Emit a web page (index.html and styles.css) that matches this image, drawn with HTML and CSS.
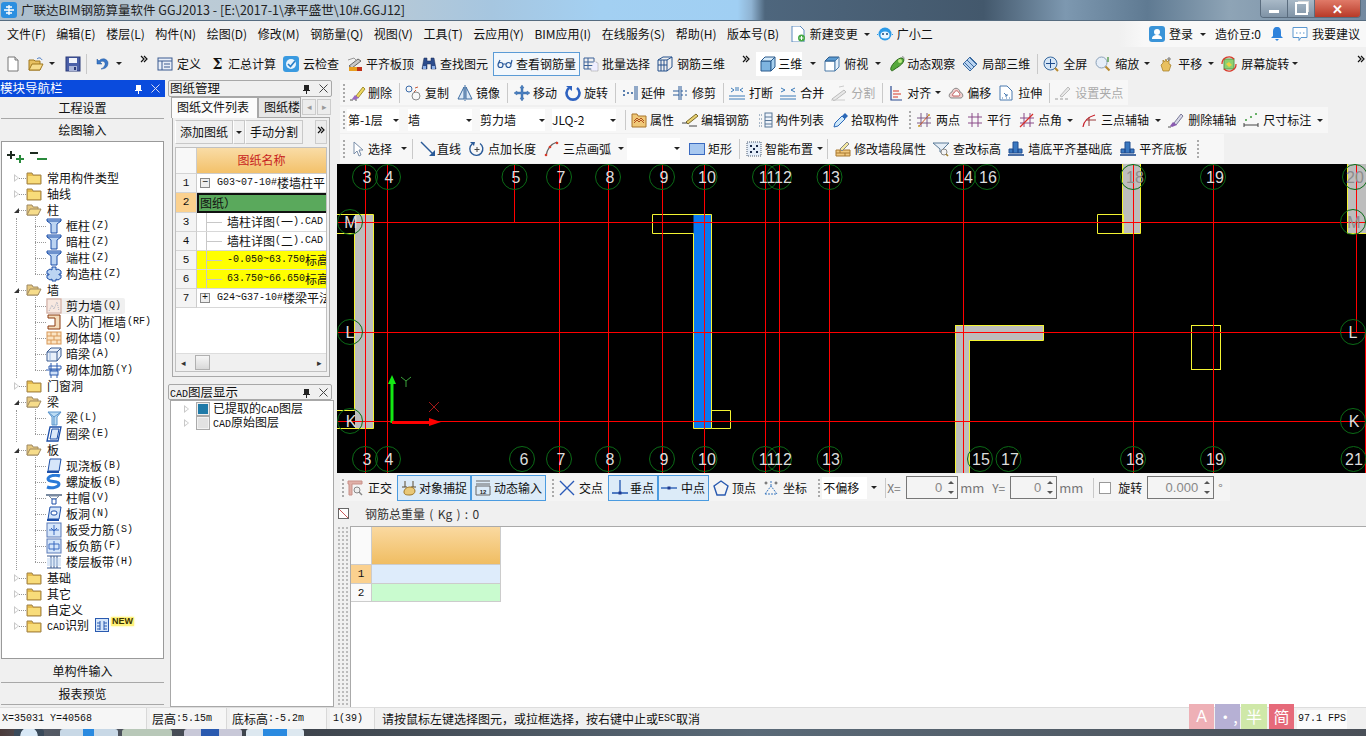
FILE: index.html
```html
<!DOCTYPE html>
<html lang="zh-CN">
<head>
<meta charset="utf-8">
<title>广联达BIM钢筋算量软件 GGJ2013</title>
<link rel="stylesheet" href="styles.css">
</head>
<body>
<svg class="defs" xmlns="http://www.w3.org/2000/svg">
<symbol id="new" viewBox="0 0 16 16"><path d="M3 1h7l3 3v11H3z" fill="#fff" stroke="#777"/><path d="M10 1v3h3" fill="#ddd" stroke="#777"/></symbol>
<symbol id="open" viewBox="0 0 16 16"><path d="M1 14V4h5l1 1h5v9z" fill="#e8c060" stroke="#a07820"/><path d="M1 14l3-6h11l-3 6z" fill="#f7dc8c" stroke="#a07820"/><path d="M9 3c2-2 4-1 5 1" fill="none" stroke="#3a70c0"/></symbol>
<symbol id="save" viewBox="0 0 16 16"><rect x="1" y="1" width="14" height="14" fill="#4a5fa8" stroke="#2a3a78"/><rect x="4" y="2" width="8" height="5" fill="#f2f4fa"/><rect x="4" y="10" width="8" height="5" fill="#aab4d8"/><rect x="9" y="11" width="2" height="3" fill="#2a3a78"/></symbol>
<symbol id="undo" viewBox="0 0 16 16"><path d="M3 3v5h5L6 6c3-2 6 0 5 3-1 2-2 3-4 4 5 0 7-3 7-6 0-4-6-6-9-2z" fill="#3b78c8" stroke="#1f559c" stroke-width=".5"/></symbol>
<symbol id="def" viewBox="0 0 16 16"><rect x="1" y="2" width="14" height="12" fill="#e8eef8" stroke="#3a5a90"/><path d="M1 5h14M5 5v9M7 8h6M7 11h6" stroke="#3a5a90" fill="none"/></symbol>
<symbol id="cloud" viewBox="0 0 16 16"><rect x="0" y="0" width="16" height="16" rx="3" fill="#3a9ae0"/><circle cx="8" cy="8" r="5" fill="#eaf5fd"/><path d="M5 8l2.500 2.500L12 5" fill="none" stroke="#2a7fc8" stroke-width="1.700"/></symbol>
<symbol id="flush" viewBox="0 0 16 16"><path d="M2 10l9-7 3 2-9 7z" fill="#c8c8c8" stroke="#666"/><path d="M1 4l6-2 2 2" fill="none" stroke="#999"/><rect x="2" y="11" width="8" height="4" fill="#e8a020"/><rect x="10" y="11" width="5" height="4" fill="#c03018"/></symbol>
<symbol id="binoc" viewBox="0 0 16 16"><path d="M3 2h3v3h4V2h3l2 11h-5V8H6v5H1z" fill="#2c4c8c" stroke="#1a2a55" stroke-width=".5"/><rect x="2" y="10" width="3" height="3" fill="#8cb0e8"/><rect x="11" y="10" width="3" height="3" fill="#8cb0e8"/></symbol>
<symbol id="glasses" viewBox="0 0 16 16"><path d="M1 9a2.500 2.500 0 1 0 5 0 2.500 2.500 0 1 0-5 0zM9 9a2.500 2.500 0 1 0 5 0 2.500 2.500 0 1 0-5 0zM6 8l3 0M1 8l2-4M14 8l1-4" fill="none" stroke="#2a5a9c" stroke-width="1.200"/></symbol>
<symbol id="batch" viewBox="0 0 16 16"><path d="M1 2h10v11H1zM1 6h10M1 9.500h10M5 2v11" fill="none" stroke="#3a6098"/><path d="M11 5l4 2v8H8v-2" fill="#eef" stroke="#999" stroke-dasharray="1 1"/></symbol>
<symbol id="r3d" viewBox="0 0 16 16"><path d="M1 4l5-3h9v10l-5 4H1zM1 4h9v11M10 4l5-3M4 4v11M7 4v11M1 9h9" fill="none" stroke="#25508c"/></symbol>
<symbol id="cube" viewBox="0 0 16 16"><path d="M1 5h10v10H1z" fill="#7eb4e0" stroke="#2a5a8c"/><path d="M1 5l4-4h10l-4 4z" fill="#d6ebfa" stroke="#2a5a8c"/><path d="M11 5l4-4v10l-4 4z" fill="#a8d0ee" stroke="#2a5a8c"/></symbol>
<symbol id="top" viewBox="0 0 16 16"><path d="M1 5h10v10H1z" fill="#fff" stroke="#4a7aa8"/><path d="M1 5l4-4h10l-4 4z" fill="#5a9ad0" stroke="#2a5a8c"/><path d="M11 5l4-4v10l-4 4z" fill="#e6f0fa" stroke="#4a7aa8"/></symbol>
<symbol id="orbit" viewBox="0 0 16 16"><path d="M2 14c-2-3 7-13 11-12s1 6-4 9-6 5-7 3z" fill="#56a83c" stroke="#2c6a1c"/><path d="M13 1c1-1 2 0 2 2" fill="none" stroke="#888"/><circle cx="11" cy="5" r="2" fill="#b8e880"/></symbol>
<symbol id="local" viewBox="0 0 16 16"><path d="M1 8l7-7 7 7-7 7z" fill="#b9d3f0" stroke="#3a6aa0"/><path d="M5 4l7 7M8 2l6 6M3 7l6 6" stroke="#3a6aa0" fill="none"/></symbol>
<symbol id="fulls" viewBox="0 0 16 16"><circle cx="7.500" cy="7.500" r="6.500" fill="#d6e6f6" stroke="#3a6aa0"/><path d="M7.500 3v9M3 7.500h9" stroke="#1f4c8c"/><path d="M12 12l3 3" stroke="#b88a30" stroke-width="2"/></symbol>
<symbol id="zoomi" viewBox="0 0 16 16"><circle cx="6.500" cy="6.500" r="5.500" fill="#e6eef8" stroke="#8aa0b8"/><path d="M10.500 10.500l4 4" stroke="#b88a30" stroke-width="2.200"/><path d="M13 1v5" stroke="#3a8a30" stroke-width="1.200"/></symbol>
<symbol id="pan" viewBox="0 0 16 16"><path d="M3 9l2-2V4l1.500 2L8 3l1 3 2-2v4l2 1-2 6H5z" fill="#e8c060" stroke="#a07820" stroke-width=".7"/><path d="M11 1v4M9 3h4" stroke="#777"/></symbol>
<symbol id="srot" viewBox="0 0 16 16"><rect x="3" y="3" width="10" height="10" fill="#8cd070" stroke="#5a9a50"/><path d="M5 8l3-2 3 3-3 2z" fill="#f0d040"/><path d="M1 8a7 7 0 0 1 12-5M15 8a7 7 0 0 1-12 5" fill="none" stroke="#d83a2a" stroke-width="1.300"/></symbol>
<symbol id="change" viewBox="0 0 16 16"><path d="M2 0h8l4 4v12H2z" fill="#fff" stroke="#5a8abf"/><circle cx="11.500" cy="12" r="3.500" fill="#46a846"/><path d="M9.500 12h4M11.500 10v4" stroke="#fff"/></symbol>
<symbol id="bot" viewBox="0 0 16 16"><circle cx="8" cy="8" r="6.500" fill="#2a9ae8"/><ellipse cx="8" cy="9" rx="4.500" ry="3.500" fill="#e8f6ff"/><circle cx="6" cy="8" r="1" fill="#1a4a7a"/><circle cx="10" cy="8" r="1" fill="#1a4a7a"/><path d="M1 8l-1 1M15 8l1 1" stroke="#2a9ae8"/></symbol>
<symbol id="user" viewBox="0 0 16 16"><rect width="16" height="16" rx="3" fill="#3a94d8"/><circle cx="8" cy="6" r="3" fill="#fff"/><path d="M3 13c0-3 2-4 5-4s5 1 5 4z" fill="#fff"/></symbol>
<symbol id="bell" viewBox="0 0 12 16"><path d="M6 1c3 0 4 2 4 5v4l2 2H0l2-2V6c0-3 1-5 4-5z" fill="#2f83dc"/><path d="M4 13h4l-2 2z" fill="#2f83dc"/></symbol>
<symbol id="idea" viewBox="0 0 16 16"><path d="M1 1.500h14v10H9l-2 3v-3H1z" fill="#fff" stroke="#5b97cf"/><path d="M4 7h1.500M7.500 7H9M11 7h1.500" stroke="#5b97cf"/></symbol>
<symbol id="del" viewBox="0 0 16 16"><path d="M6 11L13 2l2 2-7 9z" fill="#f0d860" stroke="#a09030"/><path d="M5 10l4 3-5 2-2-1z" fill="#9a6ac0"/><path d="M0 15h3M5 15h2" stroke="#555"/></symbol>
<symbol id="copy" viewBox="0 0 16 16"><circle cx="4" cy="4" r="3" fill="none" stroke="#3a6aa8"/><circle cx="11" cy="11" r="4" fill="none" stroke="#888"/><path d="M10 3l3-1M9 7l2-2" stroke="#c85a3a"/></symbol>
<symbol id="mirror" viewBox="0 0 16 16"><path d="M7 2L1 14h6zM9 2l6 12H9z" fill="#dbe8f6" stroke="#3a6aa0"/><path d="M8 0v16" stroke="#3a6aa0"/></symbol>
<symbol id="move" viewBox="0 0 16 16"><path d="M8 0l2 3H9v4h4V6l3 2-3 2V9H9v4h1l-2 3-2-3h1V9H3v1L0 8l3-2v1h4V3H6z" fill="#4a7fc0" stroke="#2a5a98" stroke-width=".4"/></symbol>
<symbol id="rot" viewBox="0 0 16 16"><path d="M4 3a6.500 6.500 0 1 0 8 0" fill="none" stroke="#2e62c0" stroke-width="2.600"/><path d="M1 1h6v5z" fill="#2e62c0"/></symbol>
<symbol id="extend" viewBox="0 0 16 16"><path d="M1 6h2M1 10h2M5 8h2M9 8h2" stroke="#2a5a98" stroke-width="1.400"/><path d="M13 1v14M15 1v14" stroke="#2a5a98"/></symbol>
<symbol id="trim" viewBox="0 0 16 16"><path d="M6 1v14M8 1v14" stroke="#2a5a98"/><path d="M0 6h6M0 10h6M8 6h2M12 6h2M8 10h2M12 10h2" stroke="#2a5a98"/></symbol>
<symbol id="brk" viewBox="0 0 16 16"><path d="M0 11h16M0 14h16" stroke="#3a7ab8"/><path d="M2 3l3 2-3 2M14 3l-3 2 3 2" fill="none" stroke="#3a7ab8"/><path d="M7 2v4M9 2v4" stroke="#3a7ab8"/></symbol>
<symbol id="merge" viewBox="0 0 16 16"><path d="M0 11h16M0 14h16" stroke="#3a7ab8"/><path d="M1 3l4 2-4 2M15 3l-4 2 4 2" fill="none" stroke="#3a7ab8"/></symbol>
<symbol id="split" viewBox="0 0 16 16"><path d="M1 14l12-9 2 2-12 9z" fill="#e8e8e8" stroke="#bbb"/><path d="M0 15h14M8 2l5-1" stroke="#ccc"/></symbol>
<symbol id="align" viewBox="0 0 13 16"><path d="M1 1v14h11" fill="none" stroke="#2a4a90" stroke-width="1.200"/><path d="M3 6h6M3 9h8M3 12h5" stroke="#d83a2a" stroke-width="1.200"/></symbol>
<symbol id="offset" viewBox="0 0 16 16"><path d="M3 13c-3-1-2-5 1-6 1-5 7-5 8 0 3 1 4 5 1 6z" fill="#f0d0d0" stroke="#888"/><path d="M5 11c-1-1 0-3 1-3 1-3 4-3 5 0 1 0 1 3 0 3z" fill="#fff" stroke="#c06060"/></symbol>
<symbol id="stretch" viewBox="0 0 16 16"><path d="M2 1h7l5 5v9H2z" fill="#fff" stroke="#4a7ab0"/><path d="M6 8l3 3M9 9v2H7" stroke="#4a7ab0" fill="none"/><path d="M4 13h1M8 13h1M11 13h1" stroke="#4a7ab0"/></symbol>
<symbol id="setgrip" viewBox="0 0 16 16"><path d="M5 11l8-9 2 2-8 8z" fill="#e8e8e8" stroke="#bbb"/><path d="M0 14h3M5 14h3M10 14h3" stroke="#bbb" stroke-width="1.400"/></symbol>
<symbol id="prop" viewBox="0 0 16 16"><path d="M1 15V2h5l1 2h8v11z" fill="#f0c878" stroke="#a8742a"/><path d="M3 11l3-3 2 2 2-2 3 3M3 9l3-3 2 2 2-2 3 3" fill="none" stroke="#b05020"/></symbol>
<symbol id="edit" viewBox="0 0 16 16"><path d="M4 10L14 2l2 2L6 12z" fill="#e8d070" stroke="#7a6a2a"/><path d="M0 11h5M7 14h8" stroke="#444"/></symbol>
<symbol id="list" viewBox="0 0 16 16"><rect x="8" y="1" width="7" height="14" fill="#eef3fa" stroke="#5a7898"/><path d="M8 5h7M8 8.500h7M8 12h7" stroke="#5a7898"/><path d="M2 3h3M2 7h3M2 11h3M2 14h3" stroke="#5a7898" stroke-dasharray="1 1"/></symbol>
<symbol id="pick" viewBox="0 0 16 16"><path d="M1 15l1-4 7-7 3 3-7 7z" fill="#cfe8fa" stroke="#2a68b8"/><path d="M9 4l3-3 3 3-3 3z" fill="#2a68b8"/></symbol>
<symbol id="twop" viewBox="0 0 16 16"><path d="M5 1v14M11 1v14M1 6h14M1 11h14" stroke="#7a5a88"/><path d="M3 14L13 3" stroke="#c85a2a"/><circle cx="3" cy="14" r="1" fill="#c8a030"/><circle cx="13" cy="3" r="1" fill="#c8a030"/></symbol>
<symbol id="para" viewBox="0 0 16 16"><path d="M5 1v14M11 1v14M1 5h14M1 11h14" stroke="#8a4a88"/></symbol>
<symbol id="angle" viewBox="0 0 16 16"><path d="M5 1v14M11 1v14M1 6h14M1 11h14" stroke="#8a4a88"/><path d="M1 15L14 2" stroke="#d8302a" stroke-width="1.200"/></symbol>
<symbol id="tpa" viewBox="0 0 16 16"><path d="M2 15C3 8 7 5 14 3" fill="none" stroke="#c8202a" stroke-width="1.200"/><path d="M8 5v9M5 8h10" stroke="#9a3a3a"/></symbol>
<symbol id="delax" viewBox="0 0 16 16"><path d="M6 11L13 2l2 2-7 9z" fill="#d8d8e8" stroke="#7a7a98"/><path d="M5 10l4 3-5 2-2-1z" fill="#8a5ab0"/><path d="M0 15h3" stroke="#555"/></symbol>
<symbol id="dim" viewBox="0 0 16 16"><path d="M1 11v4M15 11v4M1 13h14" stroke="#444"/><circle cx="3" cy="8" r="1" fill="#3a9a3a"/><circle cx="8" cy="5" r="1" fill="#3a9a3a"/><circle cx="13" cy="2" r="1" fill="#3a9a3a"/></symbol>
<symbol id="sel" viewBox="0 0 16 16"><path d="M2 1v12l3-3 2 5 2-1-2-5h4z" fill="#fff" stroke="#7a8ea8"/></symbol>
<symbol id="line" viewBox="0 0 16 16"><path d="M1 1l12 12" stroke="#2a5a98" stroke-width="1.400"/><path d="M15 9v6H9z" fill="#2a5a98"/></symbol>
<symbol id="ptlen" viewBox="0 0 16 16"><path d="M3 3a6.500 6.500 0 1 0 8-.5" fill="none" stroke="#2a5a98" stroke-width="1.400"/><path d="M1 1l5 0-1 4z" fill="#2a5a98"/><path d="M8 6v5M5.500 8.500h5" stroke="#444"/></symbol>
<symbol id="arc" viewBox="0 0 16 16"><path d="M2 15C3 8 7 3 13 1" fill="none" stroke="#666" stroke-width="1.300"/><circle cx="2" cy="14" r="1.300" fill="#d83a2a"/><circle cx="6" cy="6" r="1.300" fill="#d83a2a"/><circle cx="13" cy="2" r="1.300" fill="#d83a2a"/></symbol>
<symbol id="rect" viewBox="0 0 16 16"><rect x=".5" y="2.500" width="15" height="11" fill="#a8c8f0" stroke="#3a6ac0"/></symbol>
<symbol id="smart" viewBox="0 0 16 16"><rect x="1" y="1" width="14" height="14" fill="#e4edf8" stroke="#4a5a70" stroke-dasharray="1 1"/><path d="M4 4h2v2H4zM10 4h2v2h-2zM4 10h2v2H4zM10 10h2v2h-2zM7 7h2v2H7z" fill="#1a2a4a"/></symbol>
<symbol id="modwall" viewBox="0 0 16 16"><path d="M1 9h14v6H1z" fill="#f0c880" stroke="#a87830"/><path d="M1 12h14M5 9v3M10 12v3" stroke="#a87830"/><path d="M5 8l7-7 2 2-7 7z" fill="#f4e8a0" stroke="#888"/></symbol>
<symbol id="level" viewBox="0 0 16 16"><path d="M0 2h16L10 8v3H7V8z" fill="#e6eef6" stroke="#5a7a98"/><circle cx="11" cy="11" r="3" fill="#f4f4f4" stroke="#888"/><path d="M13 13l2 2" stroke="#a08030" stroke-width="1.600"/></symbol>
<symbol id="wbase" viewBox="0 0 16 16"><path d="M5 1h5v11H5zM1 8h4v4H1zM10 8h4v4h-4z" fill="#3a78c0" stroke="#1f4c90"/><path d="M0 14h16" stroke="#1f4c90" stroke-width="1.600"/></symbol>
<symbol id="ortho" viewBox="0 0 16 16"><path d="M1 1h14v3H5v11H2V4H1z" fill="#e0b0a8" stroke="#c89088"/><circle cx="10" cy="10" r="3" fill="#eee" stroke="#888"/><path d="M12 12l3 3" stroke="#888" stroke-width="1.400"/></symbol>
<symbol id="snap" viewBox="0 0 16 16"><path d="M4 1v6M12 1v6M1 7h5M10 7h5" stroke="#5a4a30"/><path d="M3 12c0-3 3-5 6-5s5 2 5 4-2 4-5 4-6 0-6-3z" fill="#e8c878" stroke="#a07828"/></symbol>
<symbol id="dyn" viewBox="0 0 16 16"><path d="M1 1h14M1 4h14M1 6h14v9H1z" fill="none" stroke="#666"/><text class="tiny" x="8" y="14">12</text></symbol>
<symbol id="cross" viewBox="0 0 16 16"><path d="M1 1l14 14M15 1L1 15" stroke="#2a5ab8" stroke-width="1.400"/></symbol>
<symbol id="perp" viewBox="0 0 16 16"><path d="M8 0v13M0 13h16" stroke="#1f55b0" stroke-width="1.300"/><rect x="6.500" y="11.500" width="3" height="3" fill="#1f3a90"/></symbol>
<symbol id="mid" viewBox="0 0 16 16"><path d="M0 8h16" stroke="#1f55b0" stroke-width="1.300"/><rect x="6.500" y="6.500" width="3" height="3" fill="#1f3a90"/></symbol>
<symbol id="vert" viewBox="0 0 16 16"><path d="M8 1l7 5-3 9H4L1 6z" fill="none" stroke="#2a5ab0" stroke-width="1.400"/></symbol>
<symbol id="coord" viewBox="0 0 16 16"><path d="M2 14L8 6l6 8M8 6V1M2 14h12" fill="none" stroke="#3a78c0" stroke-dasharray="2 1"/><circle cx="3" cy="3" r="1" fill="none" stroke="#555"/><circle cx="13" cy="3" r="1" fill="none" stroke="#555"/></symbol>
<symbol id="col" viewBox="0 0 16 16"><path d="M1 1h14v2l-4 3v9H5V6L1 3z" fill="#bcd4f2" stroke="#1d4fa8"/><path d="M1 3h14" stroke="#1d4fa8"/></symbol>
<symbol id="col4" viewBox="0 0 16 16"><path d="M6 1h4v3l2-1 3 2v3h-2v1h2v3l-3 2-2-1v2H6v-2l-2 1-3-2v-3h2V8H1V5l3-2 2 1z" fill="#bcd4f2" stroke="#1d4fa8"/></symbol>
<symbol id="shear" viewBox="0 0 16 16"><rect x="1" y="1" width="14" height="14" fill="#f8e8e0" stroke="#c8a8a0"/><path d="M3 13l3-6 2 4 3-7 2 9" fill="none" stroke="#a8b0c0" stroke-dasharray="1 1"/></symbol>
<symbol id="door" viewBox="0 0 16 16"><path d="M2 1h12v14H2v-3h7V4H2z" fill="#f4dcbc" stroke="#8a3a10"/></symbol>
<symbol id="brick" viewBox="0 0 16 16"><rect x="1" y="2" width="14" height="12" fill="#fbe4c4" stroke="#d89858"/><path d="M1 6h14M1 10h14M5 2v4M11 2v4M8 6v4M5 10v4M11 10v4" stroke="#d89858"/></symbol>
<symbol id="hbeam" viewBox="0 0 16 16"><path d="M1 6l4-4h10v8l-4 5H1z" fill="#e8f0fa" stroke="#3a5a90"/><path d="M1 6h10v9M11 6l4-4" fill="none" stroke="#3a5a90"/><path d="M4 6v9" stroke="#9ab8e0"/></symbol>
<symbol id="net" viewBox="0 0 16 16"><path d="M3 4h12v3H3zM0 8h14M5 1v15M11 1v15" fill="none" stroke="#2a5ab0"/><rect x="4" y="9" width="8" height="4" fill="#cfe0f8" stroke="#2a5ab0"/></symbol>
<symbol id="beam" viewBox="0 0 16 16"><path d="M2 2l13 0-4 5v8H6V7z" fill="#bcdcf4" stroke="#5a94cc"/><path d="M8 7v8M2 2l6 5 7-5" fill="none" stroke="#5a94cc"/></symbol>
<symbol id="ring" viewBox="0 0 16 16"><path d="M4 1h11l-3 14H1z" fill="#fff" stroke="#1d4fa8" stroke-width="1.300"/><path d="M6 3h7l-2 10H4z" fill="#dbe8f8" stroke="#1d4fa8"/></symbol>
<symbol id="slab" viewBox="0 0 16 16"><path d="M4 1h11l-2 12H2z" fill="#d6e6fa" stroke="#1d4fa8"/><path d="M1 14h12" stroke="#1d4fa8" stroke-width="2"/></symbol>
<symbol id="spiral" viewBox="0 0 16 16"><path d="M14 2C9 0 2 2 2 5c0 4 11 1 11 5 0 3-7 5-12 3" fill="none" stroke="#2a7ad8" stroke-width="3"/></symbol>
<symbol id="cap" viewBox="0 0 16 16"><path d="M0 4h16v2H0z" fill="#7a8aa0"/><path d="M3 6h10l-3 3H6z" fill="#fff" stroke="#7a8aa0"/><path d="M6 9h4v5H6z" fill="#fff" stroke="#1d4fa8"/></symbol>
<symbol id="hole" viewBox="0 0 16 16"><path d="M4 1h11l-2 12H2z" fill="#d6e6fa" stroke="#1d4fa8"/><rect x="5" y="5" width="6" height="4" rx="2" fill="#fff" stroke="#1d4fa8"/><path d="M1 14h12" stroke="#1d4fa8" stroke-width="2"/></symbol>
<symbol id="srebar" viewBox="0 0 16 16"><rect x="1" y="1" width="14" height="14" fill="#d6e6fa" stroke="#5a7ab8"/><path d="M8 3v10M3 8h10M5 6l3 3 3-3" fill="none" stroke="#3a6ac0"/></symbol>
<symbol id="nrebar" viewBox="0 0 16 16"><rect x="1" y="1" width="14" height="14" fill="#d6e6fa" stroke="#5a7ab8"/><path d="M8 3v10M3 6h10v5H3z" fill="none" stroke="#3a6ac0"/></symbol>
<symbol id="band" viewBox="0 0 16 16"><path d="M1 2h14M1 14h14M5 2v12M11 2v12M8 2v12" stroke="#3a5a90"/><rect x="1" y="4" width="14" height="8" fill="#bcd4f2" fill-opacity=".5"/></symbol>
<symbol id="cad" viewBox="0 0 14 16"><rect x=".5" y="1.500" width="13" height="13" fill="#d6e6fa" stroke="#2a5ab0"/><path d="M5 4v9M9 4v9M2 6h3M2 9h3M2 12h3M9 6h3M9 9h3M9 12h3" stroke="#2a5ab0"/></symbol>
<symbol id="fold" viewBox="0 0 16 16"><path d="M1 3h5l1 2h8v9H1z" fill="#e6bb4c" stroke="#a0834a"/><path d="M2 6h12v7H2z" fill="#f8dc7a"/></symbol>
<symbol id="foldo" viewBox="0 0 16 16"><path d="M1 3h5l1 2h5v8H1z" fill="#e6c880" stroke="#a08a60"/><path d="M1 13l3-6h11l-3 6z" fill="#f6dc8a" stroke="#a08a60"/></symbol>
<symbol id="xp" viewBox="0 0 18 14"><path d="M0 5h3V2h2v3h3v2H5v3H3V7H0z" fill="#1d2a20"/><path d="M9 9h3V6h2v3h3v2h-3v3h-2v-3H9z" fill="#2a8a3c"/></symbol>
<symbol id="xm" viewBox="0 0 18 14"><path d="M0 3h8v2H0z" fill="#1d2a20"/><path d="M7 9h10v2H7z" fill="#2a8a3c"/></symbol>
<symbol id="pin" viewBox="0 0 9 10"><path d="M2 1h5v5h1v1H5v3H4V7H1V6h1z" fill="#222"/></symbol>
<symbol id="pinw" viewBox="0 0 9 10"><path d="M2 1h5v5h1v1H5v3H4V7H1V6h1z" fill="#fff"/></symbol>
<symbol id="close" viewBox="0 0 9 9"><path d="M.5.5l8 8M8.500.5l-8 8" stroke="#444"/></symbol>
<symbol id="closew" viewBox="0 0 9 9"><path d="M.5.5l8 8M8.500.5l-8 8" stroke="#dde"/></symbol>
<symbol id="dbl" viewBox="0 0 8 8"><path d="M1 1l3 3-3 3M4 1l3 3-3 3" fill="none" stroke="#111" stroke-width="1.200"/></symbol>
<symbol id="lay1" viewBox="0 0 14 14"><rect x=".5" y=".5" width="13" height="13" fill="#eee" stroke="#aaa"/><rect x="2" y="2" width="10" height="10" fill="#1f7aa8"/></symbol>
<symbol id="lay2" viewBox="0 0 14 14"><rect x=".5" y=".5" width="13" height="13" fill="#f2f2f2" stroke="#aaa"/><rect x="2" y="2" width="10" height="10" fill="#e2e2e2"/></symbol>
</svg>

<div class="win">
  <header class="title">
    <svg class="applogo" viewBox="0 0 16 16"><rect width="16" height="16" rx="3" fill="#2c8fe0"/><path d="M8 3v10M3 8h10M5 5h6M5 11h6" stroke="#fff" stroke-width="1.300" fill="none"/></svg>
    <span class="title-text">广联达BIM钢筋算量软件 GGJ2013 - [E:\2017-1\承平盛世\10#.GGJ12]</span>
    <div class="winbtns"><i class="wb wmin"></i><i class="wb wres"></i><i class="wb wcls">✕</i></div>
  </header>

  <nav class="menu">
    <span class="mi">文件(F)</span><span class="mi">编辑(E)</span><span class="mi">楼层(L)</span><span class="mi">构件(N)</span><span class="mi">绘图(D)</span><span class="mi">修改(M)</span><span class="mi">钢筋量(Q)</span><span class="mi">视图(V)</span><span class="mi">工具(T)</span><span class="mi">云应用(Y)</span><span class="mi">BIM应用(I)</span><span class="mi">在线服务(S)</span><span class="mi">帮助(H)</span><span class="mi">版本号(B)</span>
    <span class="it"><svg class="ic"><use href="#change"/></svg>新建变更</span><i class="dn m6"></i>
    <span class="it m7"><svg class="ic"><use href="#bot"/></svg>广小二</span>
    <div class="menu-right">
      <span class="it"><svg class="ic"><use href="#user"/></svg>登录</span><i class="dn m7"></i>
      <span class="m9">造价豆:0</span>
      <svg class="ic12 m10"><use href="#bell"/></svg>
      <span class="it m9"><svg class="ic"><use href="#idea"/></svg>我要建议</span>
    </div>
  </nav>

  <div class="tb1">
    <svg class="ic m5"><use href="#new"/></svg><svg class="ic m7"><use href="#open"/></svg><i class="dn m5"></i><svg class="ic m10"><use href="#save"/></svg><i class="sep m5"></i><svg class="ic m7"><use href="#undo"/></svg><i class="dn m6"></i>
    <svg class="dbl m18"><use href="#dbl"/></svg>
    <span class="it m9"><svg class="ic"><use href="#def"/></svg>定义</span>
    <span class="it m10 g4"><b class="sigma">Σ</b>汇总计算</span>
    <span class="it m7"><svg class="ic"><use href="#cloud"/></svg>云检查</span>
    <span class="it m8 g3"><svg class="ic"><use href="#flush"/></svg>平齐板顶</span>
    <span class="it m7 g3"><svg class="ic"><use href="#binoc"/></svg>查找图元</span>
    <span class="it m5 g3 on pad4"><svg class="ic"><use href="#glasses"/></svg>查看钢筋量</span>
    <span class="it m3 g3"><svg class="ic"><use href="#batch"/></svg>批量选择</span>
    <span class="it m7"><svg class="ic"><use href="#r3d"/></svg>钢筋三维</span>
    <svg class="dbl m17"><use href="#dbl"/></svg>
    <span class="it white m6 g2"><svg class="ic"><use href="#cube"/></svg>三维</span><i class="dn m8"></i>
    <span class="it m8"><svg class="ic"><use href="#top"/></svg>俯视</span><i class="dn m7"></i>
    <span class="it m8 g2"><svg class="ic"><use href="#orbit"/></svg>动态观察</span>
    <span class="it m7"><svg class="ic"><use href="#local"/></svg>局部三维</span><i class="sep m7"></i>
    <span class="it m5"><svg class="ic"><use href="#fulls"/></svg>全屏</span>
    <span class="it m8"><svg class="ic"><use href="#zoomi"/></svg>缩放</span><i class="dn m5"></i>
    <span class="it m8"><svg class="ic"><use href="#pan"/></svg>平移</span><i class="dn m6"></i>
    <span class="it m7"><svg class="ic"><use href="#srot"/></svg>屏幕旋转</span><i class="dn m3"></i>
    <svg class="dbl end"><use href="#dbl"/></svg>
  </div>

  <div class="main">
    <aside class="nav">
      <div class="nav-head"><span>模块导航栏</span><svg class="pin"><use href="#pinw"/></svg><svg class="cl"><use href="#closew"/></svg></div>
      <div class="navbtn">工程设置</div>
      <div class="navbtn b2">绘图输入</div>
      <div class="treebox">
        <div class="treetool"><svg class="xb"><use href="#xp"/></svg><svg class="xb"><use href="#xm"/></svg></div>
        <div class="row rt"><i class="exc"></i><svg class="ic"><use href="#fold"/></svg>常用构件类型</div>
        <div class="row rt"><i class="exc"></i><svg class="ic"><use href="#fold"/></svg>轴线</div>
        <div class="row rt"><i class="exo"></i><svg class="ic"><use href="#foldo"/></svg>柱</div>
        <div class="kids">
          <div class="row rc"><svg class="ic"><use href="#col"/></svg>框柱<span class="l">(Z)</span></div>
          <div class="row rc"><svg class="ic"><use href="#col"/></svg>暗柱<span class="l">(Z)</span></div>
          <div class="row rc"><svg class="ic"><use href="#col"/></svg>端柱<span class="l">(Z)</span></div>
          <div class="row rc"><svg class="ic"><use href="#col4"/></svg>构造柱<span class="l">(Z)</span></div>
        </div>
        <div class="row rt"><i class="exo"></i><svg class="ic"><use href="#foldo"/></svg>墙</div>
        <div class="kids">
          <div class="row rc"><span class="hl"><svg class="ic"><use href="#shear"/></svg>剪力墙<span class="l">(Q)</span></span></div>
          <div class="row rc"><svg class="ic"><use href="#door"/></svg>人防门框墙<span class="l">(RF)</span></div>
          <div class="row rc"><svg class="ic"><use href="#brick"/></svg>砌体墙<span class="l">(Q)</span></div>
          <div class="row rc"><svg class="ic"><use href="#hbeam"/></svg>暗梁<span class="l">(A)</span></div>
          <div class="row rc"><svg class="ic"><use href="#net"/></svg>砌体加筋<span class="l">(Y)</span></div>
        </div>
        <div class="row rt"><i class="exc"></i><svg class="ic"><use href="#fold"/></svg>门窗洞</div>
        <div class="row rt"><i class="exo"></i><svg class="ic"><use href="#foldo"/></svg>梁</div>
        <div class="kids">
          <div class="row rc"><svg class="ic"><use href="#beam"/></svg>梁<span class="l">(L)</span></div>
          <div class="row rc"><svg class="ic"><use href="#ring"/></svg>圈梁<span class="l">(E)</span></div>
        </div>
        <div class="row rt"><i class="exo"></i><svg class="ic"><use href="#foldo"/></svg>板</div>
        <div class="kids">
          <div class="row rc"><svg class="ic"><use href="#slab"/></svg>现浇板<span class="l">(B)</span></div>
          <div class="row rc"><svg class="ic"><use href="#spiral"/></svg>螺旋板<span class="l">(B)</span></div>
          <div class="row rc"><svg class="ic"><use href="#cap"/></svg>柱帽<span class="l">(V)</span></div>
          <div class="row rc"><svg class="ic"><use href="#hole"/></svg>板洞<span class="l">(N)</span></div>
          <div class="row rc"><svg class="ic"><use href="#srebar"/></svg>板受力筋<span class="l">(S)</span></div>
          <div class="row rc"><svg class="ic"><use href="#nrebar"/></svg>板负筋<span class="l">(F)</span></div>
          <div class="row rc"><svg class="ic"><use href="#band"/></svg>楼层板带<span class="l">(H)</span></div>
        </div>
        <div class="row rt"><i class="exc"></i><svg class="ic"><use href="#fold"/></svg>基础</div>
        <div class="row rt"><i class="exc"></i><svg class="ic"><use href="#fold"/></svg>其它</div>
        <div class="row rt"><i class="exc"></i><svg class="ic"><use href="#fold"/></svg>自定义</div>
        <div class="row rt"><i class="exc"></i><svg class="ic"><use href="#fold"/></svg><span><span class="l0">CAD</span>识别</span><svg class="cadic"><use href="#cad"/></svg><b class="newb">NEW</b></div>
      </div>
      <div class="navbtn b3">单构件输入</div>
      <div class="navbtn b4">报表预览</div>
    </aside>

    <section class="mid">
      <div class="phead"><span>图纸管理</span><svg class="pin"><use href="#pin"/></svg><svg class="cl"><use href="#close"/></svg></div>
      <div class="tabs">
        <span class="tab on-tab">图纸文件列表</span><span class="tab">图纸楼</span>
        <i class="tabarr">◂</i><i class="tabarr">▸</i>
      </div>
      <div class="pbox">
        <div class="ptool">
          <span class="pbtn w58">添加图纸</span><span class="pbtn w12"><i class="dn"></i></span><span class="pbtn w58">手动分割</span>
          <span class="pmore"><svg class="dbl"><use href="#dbl"/></svg></span>
        </div>
        <div class="grid">
          <div class="gh"><span class="gn"></span><span class="gt">图纸名称</span></div>
          <div class="gr"><span class="gn">1</span><span class="gc"><i class="tg">−</i><span class="l">G03~07-10#</span>楼墙柱平</span></div>
          <div class="gr sel2"><span class="gn">2</span><span class="gc">图纸）</span></div>
          <div class="gr"><span class="gn">3</span><span class="gc tl">墙柱详图<span class="l">(</span>一<span class="l">).CAD</span></span></div>
          <div class="gr"><span class="gn">4</span><span class="gc tl">墙柱详图<span class="l">(</span>二<span class="l">).CAD</span></span></div>
          <div class="gr yl"><span class="gn">5</span><span class="gc tl"><span class="l">-0.050~63.750</span>标高</span></div>
          <div class="gr yl"><span class="gn">6</span><span class="gc tl"><span class="l">63.750~66.650</span>标高</span></div>
          <div class="gr"><span class="gn">7</span><span class="gc"><i class="tg">+</i><span class="l">G24~G37-10#</span>楼梁平法</span></div>
          <div class="gscroll"><i class="sa">◂</i><i class="thumb"></i><i class="sa end2">▸</i></div>
        </div>
      </div>
      <div class="phead h2"><span><span class="l0">CAD</span>图层显示</span><svg class="pin"><use href="#pin"/></svg><svg class="cl"><use href="#close"/></svg></div>
      <div class="layers">
        <div class="lrow"><i class="exc"></i><svg class="ic14"><use href="#lay1"/></svg><span>已提取的<span class="l0">CAD</span>图层</span></div>
        <div class="lrow"><i class="exc"></i><svg class="ic14"><use href="#lay2"/></svg><span><span class="l0">CAD</span>原始图层</span></div>
      </div>
    </section>

    <section class="work">
      <div class="bar ba">
        <i class="grip"></i>
        <span class="it m5 g2"><svg class="ic"><use href="#del"/></svg>删除</span><i class="sep m7"></i>
        <span class="it m5"><svg class="ic"><use href="#copy"/></svg>复制</span>
        <span class="it m8 g3"><svg class="ic"><use href="#mirror"/></svg>镜像</span><i class="sep m7"></i>
        <span class="it m6 g3"><svg class="ic"><use href="#move"/></svg>移动</span>
        <span class="it m8 g3"><svg class="ic"><use href="#rot"/></svg>旋转</span><i class="sep m7"></i>
        <span class="it m6 g3"><svg class="ic"><use href="#extend"/></svg>延伸</span>
        <span class="it m8 g3"><svg class="ic"><use href="#trim"/></svg>修剪</span><i class="sep m7"></i>
        <span class="it m5"><svg class="ic"><use href="#brk"/></svg>打断</span>
        <span class="it m7"><svg class="ic"><use href="#merge"/></svg>合并</span>
        <span class="it m7 dis"><svg class="ic"><use href="#split"/></svg>分割</span><i class="sep m7"></i>
        <span class="it m7"><svg class="ic13"><use href="#align"/></svg>对齐</span><i class="dn m4"></i>
        <span class="it m7 g3"><svg class="ic"><use href="#offset"/></svg>偏移</span>
        <span class="it m7"><svg class="ic"><use href="#stretch"/></svg>拉伸</span><i class="sep m7"></i>
        <span class="it m5 dis"><svg class="ic"><use href="#setgrip"/></svg>设置夹点</span>
      </div>
      <div class="bar bb">
        <i class="grip"></i>
        <span class="combo c52 m2">第-1层<i class="dn"></i></span>
        <span class="combo c64 m9 np">墙<i class="dn"></i></span>
        <span class="combo c65 m8 np">剪力墙<i class="dn"></i></span>
        <span class="combo c64 m7 np">JLQ-2<i class="dn"></i></span><i class="sep m9"></i>
        <span class="it m5 g3"><svg class="ic"><use href="#prop"/></svg>属性</span>
        <span class="it m8 g3"><svg class="ic"><use href="#edit"/></svg>编辑钢筋</span>
        <span class="it m8 g3"><svg class="ic"><use href="#list"/></svg>构件列表</span>
        <span class="it m9 g2"><svg class="ic"><use href="#pick"/></svg>拾取构件</span><i class="grip m10"></i>
        <span class="it m5"><svg class="ic"><use href="#twop"/></svg>两点</span>
        <span class="it m7"><svg class="ic"><use href="#para"/></svg>平行</span>
        <span class="it m8 g3"><svg class="ic"><use href="#angle"/></svg>点角</span><i class="dn m5"></i>
        <span class="it m8"><svg class="ic"><use href="#tpa"/></svg>三点辅轴</span><i class="dn m6"></i>
        <span class="it m7"><svg class="ic"><use href="#delax"/></svg>删除辅轴</span>
        <span class="it m7"><svg class="ic"><use href="#dim"/></svg>尺寸标注</span><i class="dn m6"></i>
      </div>
      <div class="bar bc">
        <i class="grip"></i>
        <span class="it m7 g0"><svg class="ic"><use href="#sel"/></svg>选择</span><i class="dn m9"></i><i class="sep m5"></i>
        <span class="it m7 g1"><svg class="ic"><use href="#line"/></svg>直线</span>
        <span class="it m8 g3"><svg class="ic"><use href="#ptlen"/></svg>点加长度</span>
        <span class="it m8 g3"><svg class="ic"><use href="#arc"/></svg>三点画弧</span><i class="dn m7"></i>
        <span class="combo c53 m3"><i class="dn"></i></span>
        <span class="it m9 g3"><svg class="ic"><use href="#rect"/></svg>矩形</span><i class="sep m7"></i>
        <span class="it m6 g3"><svg class="ic"><use href="#smart"/></svg>智能布置</span><i class="dn m4"></i><i class="sep m4"></i>
        <span class="it m7 g3"><svg class="ic"><use href="#modwall"/></svg>修改墙段属性</span>
        <span class="it m7"><svg class="ic"><use href="#level"/></svg>查改标高</span>
        <span class="it m7"><svg class="ic"><use href="#wbase"/></svg>墙底平齐基础底</span>
        <span class="it m8 g3"><svg class="ic"><use href="#wbase"/></svg>平齐底板</span><i class="grip m10"></i>
      </div>

      <svg class="cadview" viewBox="337 164 1029 309" xmlns="http://www.w3.org/2000/svg">
        <rect class="bg" x="337" y="164" width="1029" height="309"/>
        <g class="walls">
          <rect class="grey" x="355" y="214" width="18" height="214"/>
          <rect class="grey" x="1123" y="164" width="18" height="69"/>
          <rect class="grey" x="1348" y="164" width="18" height="69"/>
          <path class="grey" d="M955 325h89v15h-74v133h-15z"/>
          <rect class="blue" x="693.500" y="214" width="18" height="214"/>
        </g>
        <g class="yl-lines">
          <path d="M337 214.500H373.500V428.500H337M337 233.500H354.500V410.500H337"/>
          <path d="M652.500 214.500H711.500V428.500H693.500V233.500H652.500zM711.500 410.500H730.500V428.500H711.500"/>
          <path d="M1097.500 214.500H1123.500V233.500H1097.500zM1122.500 164V233.500H1140.500V164"/>
          <path d="M1347.500 164V233.500H1366"/>
          <path d="M955.500 473V325.500H1043.500V340.500H969.500V473"/>
          <rect x="1191.500" y="325.500" width="29" height="44"/>
        </g>
        <g class="red-lines">
          <path d="M365.500 165V473M387.500 165V473M514.500 165V222M559.500 165V473M608.500 165V473M662.500 165V473M704.500 165V473M765.500 165V473M779.500 165V473M829.500 165V473M963.500 165V473M1133.500 165V473M1213.500 165V473M1356.500 165V332M1365.500 332V473"/>
          <path d="M337 222.500H1366M337 332.500H1366M337 421.500H1366"/>
        </g>
        <g class="rings">
          <circle cx="365" cy="177" r="12.500"/><circle cx="388" cy="177" r="12.500"/><circle cx="514.500" cy="177" r="12.500"/><circle cx="559" cy="177" r="12.500"/><circle cx="608" cy="177" r="12.500"/><circle cx="662" cy="177" r="12.500"/><circle cx="704.500" cy="177" r="12.500"/><circle cx="765" cy="177" r="12.500"/><circle cx="779" cy="177" r="12.500"/><circle cx="829.500" cy="177" r="12.500"/><circle cx="963" cy="177" r="12.500"/><circle cx="987" cy="177" r="12.500"/><circle cx="1133" cy="177" r="12.500"/><circle cx="1213" cy="177" r="12.500"/><circle cx="1355" cy="177" r="12.500"/>
          <circle cx="365" cy="459" r="12.500"/><circle cx="388" cy="459" r="12.500"/><circle cx="522" cy="459" r="12.500"/><circle cx="559" cy="459" r="12.500"/><circle cx="608" cy="459" r="12.500"/><circle cx="662" cy="459" r="12.500"/><circle cx="704.500" cy="459" r="12.500"/><circle cx="765" cy="459" r="12.500"/><circle cx="779" cy="459" r="12.500"/><circle cx="829.500" cy="459" r="12.500"/><circle cx="980" cy="459" r="12.500"/><circle cx="1008.500" cy="459" r="12.500"/><circle cx="1133" cy="459" r="12.500"/><circle cx="1213" cy="459" r="12.500"/><circle cx="1353.500" cy="459" r="12.500"/>
          <circle cx="350" cy="222" r="12.500"/><circle cx="350" cy="332" r="12.500"/><circle cx="350" cy="421" r="12.500"/><circle cx="1353" cy="222" r="12.500"/><circle cx="1353" cy="332" r="12.500"/><circle cx="1353" cy="421" r="12.500"/>
        </g>
        <g class="labels">
          <text x="367" y="183">3</text><text x="389" y="183">4</text><text x="516" y="183">5</text><text x="561" y="183">7</text><text x="610" y="183">8</text><text x="664" y="183">9</text><text x="707" y="183">10</text><text x="767" y="183">11</text><text x="783" y="183">12</text><text x="831" y="183">13</text><text x="964" y="183">14</text><text x="988" y="183">16</text><text class="dim" x="1135" y="183">18</text><text x="1215" y="183">19</text><text class="dim" x="1355" y="183">20</text>
          <text x="367" y="465">3</text><text x="389" y="465">4</text><text x="524" y="465">6</text><text x="561" y="465">7</text><text x="610" y="465">8</text><text x="664" y="465">9</text><text x="707" y="465">10</text><text x="767" y="465">11</text><text x="783" y="465">12</text><text x="831" y="465">13</text><text x="981" y="465">15</text><text x="1010" y="465">17</text><text x="1135" y="465">18</text><text x="1215" y="465">19</text><text x="1354" y="465">21</text>
          <text x="351" y="228">M</text><text x="350" y="338">L</text><text x="351" y="427">K</text><text class="dim" x="1354" y="228">M</text><text x="1353" y="338">L</text><text x="1354" y="427">K</text>
        </g>
        <g class="axis">
          <path class="ag" d="M390.500 383h3v40h-3zM388 384l4-9 4 9z"/>
          <path class="ar" d="M392 421h38v3h-38zM429 418l12 4-12 4z"/>
          <path class="yt" d="M401 377l5 4 5-4M406 381v6"/>
          <path class="xt" d="M429 402l10 10M439 402l-10 10"/>
        </g>
      </svg>

      <div class="bar bd">
        <i class="grip"></i>
        <span class="it m3 g5"><svg class="ic"><use href="#ortho"/></svg>正交</span>
        <span class="it m5 g2 on3 pad4"><svg class="ic"><use href="#snap"/></svg>对象捕捉</span>
        <span class="it on3 pad4 g3"><svg class="ic"><use href="#dyn"/></svg>动态输入</span><i class="grip m6"></i>
        <span class="it m5"><svg class="ic"><use href="#cross"/></svg>交点</span>
        <span class="it m5 g2 on3 pad4"><svg class="ic"><use href="#perp"/></svg>垂点</span>
        <span class="it on3 pad3"><svg class="ic"><use href="#mid"/></svg>中点</span>
        <span class="it m4 g3"><svg class="ic"><use href="#vert"/></svg>顶点</span>
        <span class="it m7"><svg class="ic"><use href="#coord"/></svg>坐标</span><i class="grip m11"></i>
        <span class="combo c45 m2">不偏移</span><i class="dn m4"></i><i class="sep m8"></i>
        <span class="lab m1">X=</span><span class="spin w52 m6">0<i class="sp"></i></span><span class="unit m2">mm</span>
        <span class="lab m6">Y=</span><span class="spin w47 m5">0<i class="sp"></i></span><span class="unit m2">mm</span><i class="sep m8"></i>
        <i class="chk m5"></i><span class="m7">旋转</span><span class="spin w67 m5">0.000<i class="sp"></i></span><span class="deg m4">°</span>
      </div>

      <div class="info"><i class="infoic"></i><span class="info-text">钢筋总重量 ( Kg ) : 0</span></div>
      <div class="sheet">
        <i class="gutter"></i>
        <div class="pane">
          <div class="t-row th"><span class="tn"></span><span class="tc"></span></div>
          <div class="t-row r1"><span class="tn">1</span><span class="tc"></span></div>
          <div class="t-row r2"><span class="tn">2</span><span class="tc"></span></div>
        </div>
      </div>
    </section>
  </div>

  <footer class="status">
    <span class="sf f1">X=35031 Y=40568</span>
    <span class="sf f2">层高<span class="l">:5.15m</span></span>
    <span class="sf f3">底标高<span class="l">:-5.2m</span></span>
    <span class="sf f4"><span class="l">1(39)</span></span>
    <span class="sf f5">请按鼠标左键选择图元，或拉框选择，按右键中止或<span class="l">ESC</span>取消</span>
    <div class="ime"><span class="a">A</span><span class="b">•,</span><span class="c">半</span><span class="d">简</span></div>
    <span class="fps">97.1 FPS</span>
  </footer>
  <div class="task"><i class="t1"></i><i class="t2"></i><i class="t3"></i><i class="t4"></i><i class="t5"></i></div>
</div>
</body>
</html>
```

FILE: styles.css
```css
* { box-sizing: border-box; }
html, body { margin: 0; padding: 0; }
body { width: 1366px; height: 736px; overflow: hidden; background: #f0f0f0; color: #111; font: 12px/16px "Noto Sans CJK SC", "Liberation Sans", sans-serif; }
i { font-style: normal; }
.defs { position: absolute; width: 0; height: 0; }
.tiny { font: 700 6px "Liberation Sans", sans-serif; text-anchor: middle; fill: #222; }

.win { display: flex; flex-direction: column; width: 1366px; height: 736px; }

.title { flex: 0 0 21px; display: flex; align-items: flex-start; background: linear-gradient(90deg, #a9bccc 0, #bccbd6 12%, #b7c9d6 28%, #a6c6e0 36%, #a3d0f2 44%, #a0cff3 54%, #8fb3d2 55%, #4e667d 56%, #43586c 72%, #7d98b0 78%, #5f7a92 84%, #8ea4b6 90%, #7389a0 100%); border-bottom: 1px solid #566c80; }
.applogo { width: 16px; height: 16px; margin: 2px 0 0 1px; }
.title-text { margin: 2px 0 0 4px; font-size: 12.500px; color: #222; white-space: nowrap; }
.winbtns { display: flex; margin-left: auto; margin-right: 5px; height: 18px; border: 1px solid #5a6c7e; border-top: 0; border-radius: 0 0 4px 4px; overflow: hidden; }
.wb { display: flex; align-items: center; justify-content: center; height: 17px; }
.wmin, .wres { width: 27px; background: linear-gradient(#a9b9c7, #7f93a6); border-right: 1px solid #5a6c7e; position: relative; }
.wmin::after { content: ""; width: 10px; height: 3px; background: #fff; margin-top: 6px; }
.wres::after { content: ""; width: 9px; height: 9px; border: 2px solid #fff; box-shadow: 2px -2px 0 -1px #ddd; }
.wcls { width: 45px; color: #fff; font-weight: 700; font-size: 13px; background: linear-gradient(#e07a68, #b83a28); }

.menu { flex: 0 0 26px; display: flex; align-items: center; padding-left: 7px; background: #f0f0f0; }
.mi { margin-right: 10.600px; white-space: nowrap; }
.menu-right { display: flex; align-items: center; margin-left: auto; padding: 0 6px 0 30px; height: 26px; background: linear-gradient(90deg, #f0f0f0, #f8f8f8 10%); }

.tb1 { flex: 0 0 33px; display: flex; align-items: center; }
.bar { display: flex; align-items: center; margin-left: 3px; padding-left: 3px; width: fit-content; background: #f7f7f7; }

.ic { width: 16px; height: 16px; flex: none; }
.ic12 { width: 12px; height: 16px; flex: none; }
.ic13 { width: 13px; height: 16px; flex: none; }
.ic14 { width: 14px; height: 14px; flex: none; }
.it { display: flex; align-items: center; gap: 4px; white-space: nowrap; flex: none; }
.g0 { gap: 0; } .g1 { gap: 1px; } .g2 { gap: 2px; } .g3 { gap: 3px; } .g4 { gap: 4px; } .g5 { gap: 5px; }
.m1 { margin-left: 1px; } .m2 { margin-left: 2px; } .m3 { margin-left: 3px; } .m4 { margin-left: 4px; } .m5 { margin-left: 5px; } .m6 { margin-left: 6px; } .m7 { margin-left: 7px; } .m8 { margin-left: 8px; } .m9 { margin-left: 9px; } .m10 { margin-left: 10px; } .m11 { margin-left: 11px; } .m17 { margin-left: 17px; } .m18 { margin-left: 18px; }

.dn { display: block; flex: none; width: 6px; height: 0; border: solid transparent; border-width: 3px 3px 0; border-top-color: #222; }
.sep { display: block; flex: none; width: 1px; height: 20px; background: #c9c9c9; }
.grip { display: block; flex: none; width: 2px; height: 18px; background: repeating-linear-gradient(#aaa 0 2px, transparent 2px 4px); }
.dbl { width: 8px; height: 8px; flex: none; align-self: flex-start; margin-top: 8px; }
.end { margin-left: auto; margin-right: 1px; }
.sigma { width: 13px; font: 700 14px "DejaVu Serif", serif; text-align: center; }
.dis { color: #aaa; }
.white { background: #fff; padding: 4px 0 4px 4px; }
.on { height: 24px; border: 1px solid #5a9bd6; background: #f2f7fc; }
.on3 { height: 26px; border: 1px solid #4a9be0; background: #dcebf8; }
.pad4 { padding: 0 3px; }
.pad3 { padding: 0 3px 0 2px; }

.combo { display: flex; align-items: center; justify-content: space-between; height: 22px; background: #fff; white-space: nowrap; flex: none; padding-left: 1px; }
.np { padding-left: 0; }
.c52 { width: 52px; } .c53 { width: 53px; justify-content: flex-end; } .c64 { width: 64px; } .c65 { width: 65px; } .c45 { width: 45px; }

.main { flex: 0 0 627px; display: flex; }

/* left navigation */
.nav { flex: 0 0 165px; display: flex; flex-direction: column; }
.nav-head { position: relative; height: 17px; padding-left: 0; background: #0a4bdd; color: #fff; font-size: 12.500px; line-height: 16px; }
.pin { position: absolute; top: 4px; right: 22px; width: 9px; height: 10px; }
.cl { position: absolute; top: 4px; right: 5px; width: 9px; height: 9px; }
.navbtn { margin: 0 1px; height: 22px; line-height: 21px; text-align: center; background: #f0f0f0; border-bottom: 1px solid #a8a8a8; }
.b2 { height: 22px; border-bottom: 0; }
.b3 { margin-top: 1px; height: 23px; border-bottom: 1px solid #a8a8a8; }
.b4 { height: 22px; border-bottom: 1px solid #a8a8a8; }
.treebox { height: 518px; margin: 0 1px; border: 1px solid #9a9a9a; background: #fff; }
.treetool { display: flex; gap: 5px; height: 28px; padding: 7px 0 0 5px; }
.xb { width: 18px; height: 14px; }
.row { position: relative; display: flex; align-items: center; height: 16px; white-space: nowrap; }
.rt { padding-left: 24px; gap: 5px; }
.rt::after { content: ""; position: absolute; left: 17px; top: 8px; width: 7px; border-top: 1px dotted #999; }
.exc, .exo { position: absolute; display: block; left: 12px; top: 4px; width: 0; height: 0; border-style: solid; z-index: 1; }
.exc { border-width: 4px 0 4px 5px; border-color: transparent transparent transparent #c8c8c8; }
.exc::after { content: ""; position: absolute; left: -4px; top: -2px; border-style: solid; border-width: 2px 0 2px 3px; border-color: transparent transparent transparent #fff; }
.exo { top: 6px; border-width: 0 0 5px 5px; border-color: transparent transparent #333 transparent; }
.kids { margin-left: 14px; border-left: 1px dotted #999; }
.rc { padding-left: 29px; gap: 4px; }
.rc::before { content: ""; position: absolute; left: 18px; top: -1px; height: 17px; border-left: 1px dotted #999; }
.rc::after { content: ""; position: absolute; left: 18px; top: 8px; width: 11px; border-top: 1px dotted #999; }
.rc .ic { position: relative; z-index: 1; background: #fff; }
.kids .rc:last-child::before { height: 9px; }
.l { font: 10px/16px "Liberation Mono", monospace; margin-left: 1px; }
.row .l { margin-left: -3px; }
.l0 { font: 10px/16px "Liberation Mono", monospace; }
.hl { display: flex; align-items: center; gap: 4px; padding-right: 4px; background: #f0f0f0; border-radius: 2px; }
.hl .ic { background: #f8e8e0; }
.cadic { width: 14px; height: 16px; margin-left: 1px; margin-top: -2px; }
.newb { margin: -9px 0 0 -3px; font: 700 9px/9px "Liberation Sans", sans-serif; color: #3a3000; background: #fff27a; padding: 0 1px; box-shadow: 0 0 2px #fff27a; }

/* middle */
.mid { flex: 0 0 166px; margin-left: 3px; display: flex; flex-direction: column; }
.phead { position: relative; height: 17px; margin-right: 2px; border: 1px solid #a8a8a8; border-radius: 2px; font-size: 12.500px; line-height: 14px; padding-left: 1px; background: #f0f0f0; }
.phead .pin { top: 3px; right: 20px; }
.phead .cl { top: 3px; right: 3px; }
.tabs { display: flex; align-items: flex-end; height: 20px; padding-left: 3px; }
.tab { height: 20px; line-height: 17px; padding: 0 5px; border: 1px solid #a8a8a8; border-bottom: 0; background: #e6e6e6; width: 43px; overflow: hidden; white-space: nowrap; }
.on-tab { width: 87px; background: #fcfcfc; height: 21px; margin-bottom: -1px; position: relative; z-index: 1; }
.tabarr { width: 14px; height: 16px; margin: 0 0 2px 1px; border: 1px solid #ccc; background: #ececec; color: #999; font-size: 9px; text-align: center; line-height: 13px; }
.pbox { height: 260px; margin-left: 4px; width: 158px; border: 1px solid #a8a8a8; padding: 2px; }
.ptool { display: flex; height: 25px; margin-bottom: 2px; }
.pbtn { display: flex; align-items: center; justify-content: center; height: 24px; background: #f0f0f0; border: 1px solid #c8c8c8; border-left-color: #fff; }
.w58 { width: 58px; } .w12 { width: 12px; }
.pmore { margin-left: auto; width: 12px; height: 24px; display: flex; justify-content: center; background: #ececec; border: 1px solid #ccc; }
.pmore .dbl { margin-top: 5px; }
.grid { position: relative; height: 225px; border: 1px solid #c0c0c0; background: #fff; }
.gh { display: flex; height: 26px; }
.gh .gn { background: #f8f8f8; }
.gt { flex: 1; text-align: center; line-height: 24px; color: #c81e1e; background: linear-gradient(#f9dca6, #f3c16a); border-bottom: 1px solid #ccc; }
.gr { display: flex; height: 19px; }
.gn { flex: 0 0 21px; text-align: center; font: 11px/18px "Liberation Mono", monospace; background: #f4f4f4; border-right: 1px solid #ccc; border-bottom: 1px solid #d4d4d4; }
.gc { position: relative; flex: 1; display: flex; align-items: center; padding-left: 20px; white-space: nowrap; overflow: hidden; border-bottom: 1px solid #d8d8d8; width: 131px; }
.tg { position: absolute; left: 3px; top: 4px; width: 10px; height: 10px; border: 1px solid #888; background: #eee; font: 10px/8px "Liberation Mono", monospace; text-align: center; }
.gc .l { margin-left: 0; }
.gc.tl { padding-left: 30px; }
.tl::before { content: ""; position: absolute; left: 9px; top: -1px; height: 20px; border-left: 1px solid #c8c8c8; }
.tl::after { content: ""; position: absolute; left: 9px; top: 9px; width: 16px; border-top: 1px solid #c8c8c8; }
.sel2 { height: 20px; }
.sel2 .gn { background: #fbd18f; }
.sel2 .gc { padding-left: 1px; background: #5aa95c; border: 2px solid #111; border-right-width: 0; }
.yl .gc { background: #ff0; }
.gscroll { position: absolute; left: 0; right: 0; bottom: 0; height: 18px; display: flex; align-items: center; background: #f0f0f0; border-top: 1px solid #ddd; font-size: 9px; color: #333; }
.sa { width: 14px; text-align: center; }
.end2 { margin-left: auto; }
.thumb { width: 15px; height: 15px; margin-left: 5px; background: linear-gradient(#f6f6f6, #d8d8d8); border: 1px solid #b0b0b0; }
.h2 { margin-top: 7px; height: 16px; margin-right: 2px; line-height: 13px; }
.h2 .l0 { line-height: 13px; }
.layers { height: 307px; margin: 0 0 0 2px; border: 1px solid #a8a8a8; background: #fff; padding-top: 1px; }
.lrow { position: relative; display: flex; align-items: center; gap: 3px; height: 14px; padding-left: 25px; white-space: nowrap; }
.lrow .exc { left: 13px; top: 3px; }
.lrow .l0 { line-height: 14px; }

/* work */
.work { flex: 1; margin-left: 3px; min-width: 0; display: flex; flex-direction: column; }
.ba { height: 25px; margin-bottom: 2px; padding-right: 5px; }
.bb { height: 26px; margin-bottom: 1px; padding-right: 5px; }
.bc { height: 29px; margin-bottom: 1px; padding-right: 25px; }
.cadview { display: block; flex: 0 0 309px; width: 1029px; height: 309px; }
.bg { fill: #000; }
.grey { fill: #bdbdbd; }
.blue { fill: #0a78f0; }
.yl-lines { fill: none; stroke: #f4f432; stroke-width: 1; }
.red-lines { fill: none; stroke: #f00; stroke-width: 1; }
.rings { fill: none; stroke: #0b6a16; stroke-width: 1; }
.labels text { font: 16px "Liberation Sans", sans-serif; fill: #dcdcdc; text-anchor: middle; }
.labels .dim { fill: #8c8c8c; }
.ag { fill: #14e814; }
.ar { fill: #f00; }
.yt { fill: none; stroke: #3aa03a; }
.xt { fill: none; stroke: #a01818; }

.bd { height: 27px; width: 890px; margin-left: 3px; padding-left: 2px; margin-top: 1px; flex: none; background: #f4f4f4; }
.lab { width: 13px; color: #777; flex: none; }
.unit { width: 26px; color: #777; flex: none; font-size: 13px; }
.deg { color: #777; }
.spin { position: relative; display: block; height: 23px; border: 1px solid #777; background: #f4f4f4; text-align: right; padding-right: 15px; color: #888; font: 13px/21px "Liberation Sans", sans-serif; flex: none; }
.w52 { width: 52px; } .w47 { width: 47px; } .w67 { width: 67px; }
.sp { position: absolute; right: 2px; top: 3px; width: 7px; height: 15px; }
.sp::before, .sp::after { content: ""; position: absolute; left: 0; border: solid transparent; border-width: 0 3px 3px; }
.sp::before { top: 1px; border-bottom-color: #555; }
.sp::after { bottom: 1px; border-width: 3px 3px 0; border-top-color: #555; }
.chk { display: block; width: 12px; height: 12px; border: 1px solid #999; background: #fff; flex: none; }

.info { flex: 0 0 25px; display: flex; align-items: center; padding-left: 1px; color: #333; }
.info-text { word-spacing: 1.600px; }
.infoic { display: block; width: 11px; height: 11px; margin: 0 16px 0 0; border: 1px solid #666; background: linear-gradient(45deg, #fff 45%, #c85a5a 45% 55%, #fff 55%); }
.sheet { flex: 1; display: flex; min-height: 0; }
.gutter { flex: 0 0 13px; background: radial-gradient(circle, #bbb 1px, transparent 1.100px) 0 0 / 4px 4px; }
.pane { flex: 1; background: #fff; border-top: 1px solid #aaa; border-left: 1px solid #aaa; }
.t-row { display: flex; width: 150px; }
.tn { flex: 0 0 21px; text-align: center; font: 11px/18px "Liberation Mono", monospace; border-right: 1px solid #ccc; border-bottom: 1px solid #ccc; background: #fafafa; }
.tc { flex: 0 0 129px; border-bottom: 1px solid #ccc; border-right: 1px solid #ccc; }
.th { height: 38px; }
.th .tc { background: linear-gradient(#fad9a0, #f0bd62); }
.r1 { height: 19px; }
.r1 .tn { background: #fbd18f; }
.r1 .tc { background: #deecfb; }
.r2 { height: 18px; }
.r2 .tc { background: #c9fbcf; }

/* status */
.status { position: relative; flex: 0 0 22px; display: flex; align-items: stretch; background: #f0f0f0; border-top: 1px solid #ddd; }
.sf { display: flex; align-items: center; padding-left: 2px; white-space: nowrap; background: #f6f6f6; border-right: 1px solid #d8d8d8; margin-right: 3px; height: 21px; }
.f1 { flex: 0 0 147px; font: 10px/16px "Liberation Mono", monospace; }
.f2 { flex: 0 0 77px; } .f3 { flex: 0 0 97px; } .f4 { flex: 0 0 45px; padding-left: 3px; } .f5 { flex: 0 0 auto; padding-left: 4px; border: 0; background: none; }
.f2 .l, .f3 .l, .f5 .l, .f4 .l { margin-left: 0; }
.ime { position: absolute; left: 1189px; top: -4px; display: flex; gap: 1px; height: 25px; color: #fff; font: 16px/25px "Noto Sans CJK SC", sans-serif; text-align: center; }
.ime span { width: 25px; }
.ime .a { background: #eeb0b6; font-family: "Liberation Sans", sans-serif; }
.ime .b { background: #b6b0d4; }
.ime .c { width: 26px; background: #cfe8a8; }
.ime .d { background: #e66a7a; margin-left: 1px; }
.fps { position: absolute; left: 1297px; top: 2px; width: 50px; height: 19px; font: 10px/18px "Liberation Mono", monospace; background: #fbfbfb; padding-left: 1px; white-space: nowrap; }

.task { flex: 0 0 7px; display: flex; background: linear-gradient(90deg, #4a3a3a 0, #555b66 3%, #3c424a 20%, #5a6a78 55%, #4a5058 100%); }
.task i { display: block; height: 7px; border-radius: 3px 3px 0 0; }
.t1 { width: 30px; margin-left: 14px; background: radial-gradient(circle at 50% 100%, #d8e8f6 50%, #3a4a5a 55%); }
.t2 { width: 58px; margin-left: 16px; background: linear-gradient(90deg, #c8d8e6 40%, #2a8ae0 40% 58%, #c8d8e6 58%); }
.t3 { width: 50px; margin-left: 4px; background: #b8c8b8; }
.t4 { width: 58px; margin-left: 12px; background: linear-gradient(90deg, #c8c8d8 30%, #2a5ab0 30% 60%, #c8c8d8 60%); }
.t5 { width: 58px; margin-left: 4px; background: linear-gradient(90deg, #dde8f0 30%, #2a8ae0 30% 70%, #dde8f0 70%); }
```
